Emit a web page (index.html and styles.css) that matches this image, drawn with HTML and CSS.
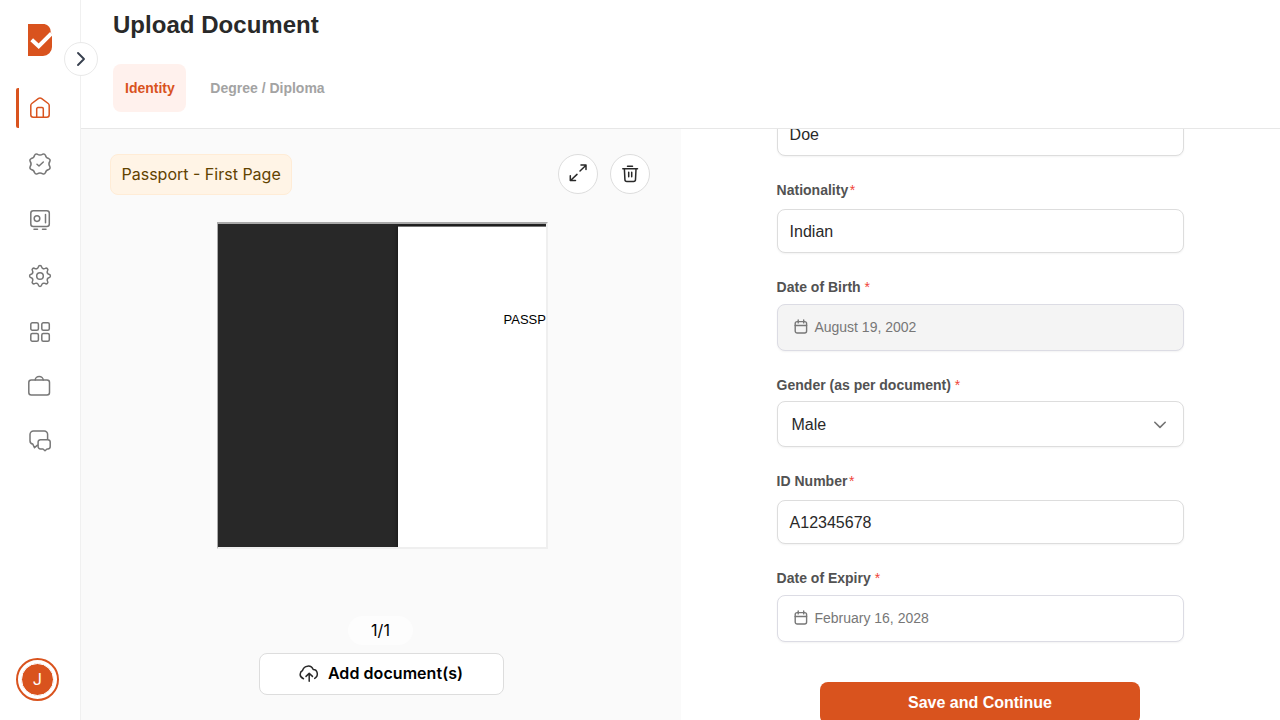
FILE: index.html
```html
<!DOCTYPE html>
<html lang="en">
<head>
<meta charset="utf-8">
<title>Upload Document</title>
<link rel="stylesheet" href="styles.css">
</head>
<body>
<div class="app">
  <aside class="sidebar">
    <svg class="logo" width="24" height="32" viewBox="0 0 24 32"><path d="M0 0h16.500a7.500 7.500 0 0 1 6.200 7.700L24 11v12a9 9 0 0 1-9 9H0z" fill="#d9531e"/><path d="M3.700 15.700l7 6.500L23.500 9.300" fill="none" stroke="#fff" stroke-width="4"/></svg>
    <nav class="nav">
      <a class="nav-item active"><svg width="24" height="24" viewBox="0 0 24 24"><path d="M2.800 9.500a2.500 2.500 0 0 1 1-2L10.600 2.400a2.400 2.400 0 0 1 2.800 0l6.800 5.100a2.500 2.500 0 0 1 1 2v9.300a2.500 2.500 0 0 1-2.500 2.500H5.300a2.500 2.500 0 0 1-2.500-2.500zM8.700 21v-8.200a1.200 1.200 0 0 1 1.200-1.200h4.200a1.200 1.200 0 0 1 1.200 1.200V21"/></svg></a>
      <a class="nav-item"><svg width="24" height="24" viewBox="0 0 24 24"><path d="M9.200 2.100Q12 4.100 14.800 2.100Q16.600 1.400 17.400 3.200Q17.900 6.100 20.800 6.600Q22.600 7.400 21.900 9.200Q19.900 12 21.900 14.800Q22.600 16.600 20.800 17.400Q17.900 17.900 17.400 20.800Q16.600 22.600 14.800 21.900Q12 19.900 9.200 21.900Q7.400 22.600 6.600 20.800Q6.100 17.900 3.200 17.400Q1.400 16.600 2.100 14.800Q4.100 12 2.100 9.200Q1.400 7.400 3.200 6.600Q6.100 6.100 6.600 3.200Q7.400 1.400 9.200 2.100zM9 12.300l2 1.700 4.300-4"/></svg></a>
      <a class="nav-item"><svg width="24" height="24" viewBox="0 0 24 24"><rect x="2.800" y="2.800" width="18.500" height="15.600" rx="2.500"/><circle cx="9" cy="10.600" r="2.800"/><path d="M17.500 6.500v8.200M6 21.200h3.500M14.500 21.200H18"/></svg></a>
      <a class="nav-item"><svg width="24" height="24" viewBox="0 0 24 24"><defs><path id="tooth" d="M8.900 4.600Q10.100 4.200 10.300 3.100Q10.600 1.600 12 1.600T13.700 3.100Q13.900 4.200 15.100 4.600"/></defs><use href="#tooth"/><use href="#tooth" transform="rotate(45 12 12)"/><use href="#tooth" transform="rotate(90 12 12)"/><use href="#tooth" transform="rotate(135 12 12)"/><use href="#tooth" transform="rotate(180 12 12)"/><use href="#tooth" transform="rotate(225 12 12)"/><use href="#tooth" transform="rotate(270 12 12)"/><use href="#tooth" transform="rotate(315 12 12)"/><circle cx="12" cy="12" r="3.300"/></svg></a>
      <a class="nav-item"><svg width="24" height="24" viewBox="0 0 24 24"><rect x="2.800" y="2.800" width="7.600" height="7.400" rx="1.500"/><rect x="13.800" y="2.800" width="7.500" height="7.400" rx="1.500"/><rect x="2.800" y="13.600" width="7.600" height="7.600" rx="1.500"/><rect x="13.800" y="13.600" width="7.500" height="7.600" rx="1.500"/></svg></a>
      <a class="nav-item briefcase"><svg width="24" height="24" viewBox="0 0 24 24"><rect x=".8" y="6" width="20.700" height="15" rx="2.500"/><path d="M7.200 6a4 3.600 0 0 1 8 0"/></svg></a>
      <a class="nav-item chat"><svg width="24" height="24" viewBox="0 0 24 24"><path d="M9.500 16.200l-3 2.500-1.700-3.600C2.700 14.800 2 13.800 2 11.700V5.500A3.500 3.500 0 0 1 5.500 2h10.800a3.300 3.300 0 0 1 3.300 3.300v5"/><path d="M12.500 10.700h7.300a2.400 2.400 0 0 1 2.400 2.400v4.500a2.400 2.400 0 0 1-2.400 2.400H19l-2 1.700-2-1.700h-2.500a2.400 2.400 0 0 1-2.400-2.400v-4.500a2.400 2.400 0 0 1 2.400-2.400z"/></svg></a>
    </nav>
    <div class="avatar"><span>J</span></div>
    <button class="expand"><svg width="16" height="16" viewBox="0 0 16 16"><path d="M5 2l6 6-6 6"/></svg></button>
  </aside>
  <div class="page">
    <header class="header">
      <h1>Upload Document</h1>
      <div class="tabs"><span class="tab selected">Identity</span><span class="tab">Degree / Diploma</span></div>
    </header>
    <main class="content">
      <section class="viewer">
        <div class="viewer-bar">
          <span class="tag">Passport - First Page</span>
          <div class="tools">
            <button class="round"><svg width="20" height="20" viewBox="0 0 20 20"><path d="M12 7l6-5.700M13 .9h5v4.600M9 10.400l-6.200 5.800M2.300 11.700v4.900h5.200"/></svg></button>
            <button class="round"><svg width="20" height="20" viewBox="0 0 20 20"><path d="M7.500 2.300h5M2.800 4.800h14.700M4.400 5.200l.5 10.200a2 2 0 0 0 2 2h6.600a2 2 0 0 0 2-2L16 5.200M8.700 8.300v4.500M11.700 8.300v4.500"/></svg></button>
          </div>
        </div>
        <div class="frame"><div class="sheet">PASSPORT</div></div>
        <span class="counter">1/1</span>
        <button class="add"><svg width="20" height="20" viewBox="0 0 20 20"><path d="M4.500 14.800C-.6 12.500 1 7.600 3.500 6.500 5 1.200 12.200.5 14.200 5.600c4.600.2 5.700 6.200 1.500 8.800M10.200 17.200V9.700M7 12.400l3.200-3 3.300 3"/></svg>Add document(s)</button>
      </section>
      <section class="form-pane">
        <form class="form">
          <div class="input">Doe</div>
          <div class="field"><label>Nationality<i class="close">*</i></label><div class="input">Indian</div></div>
          <div class="field"><label>Date of Birth <i>*</i></label><div class="input date disabled"><svg width="14" height="16" viewBox="0 0 14 16"><rect x="1.200" y="2.600" width="11.400" height="11.400" rx="2"/><path d="M1.200 6.500h11.400M4.200.9v3M9.700.9v3"/></svg>August 19, 2002</div></div>
          <div class="field"><label>Gender (as per document) <i>*</i></label><div class="input select">Male<svg width="14" height="14" viewBox="0 0 14 14"><path d="M1.800 4.300L7 9.400l5.200-5.100"/></svg></div></div>
          <div class="field"><label>ID Number<i class="close">*</i></label><div class="input">A12345678</div></div>
          <div class="field"><label>Date of Expiry <i>*</i></label><div class="input date"><svg width="14" height="16" viewBox="0 0 14 16"><rect x="1.200" y="2.600" width="11.400" height="11.400" rx="2"/><path d="M1.200 6.500h11.400M4.200.9v3M9.700.9v3"/></svg>February 16, 2028</div></div>
          <button class="save" type="button">Save and Continue</button>
        </form>
      </section>
    </main>
  </div>
</div>
</body>
</html>
```

FILE: styles.css
```css
* { box-sizing: border-box; }
body { margin: 0; font-family: "Liberation Sans", Arial, sans-serif; color: #292929; background: #fff; }
button { font: inherit; padding: 0; }
svg { display: block; flex: none; fill: none; stroke: currentColor; stroke-linecap: round; stroke-linejoin: round; }
.logo { stroke: none; stroke-linecap: butt; stroke-linejoin: miter; }
.app { display: flex; width: 1280px; height: 720px; overflow: hidden; }

.sidebar { position: relative; z-index: 2; display: flex; flex-direction: column; width: 81px; padding: 24px 0 19.500px; border-right: 1px solid #f0f0f0; }
.logo { margin-left: 28px; }
.nav { display: flex; flex-direction: column; gap: 16px; margin-top: 32px; margin-left: 16px; }
.nav-item { display: flex; align-items: center; height: 40px; padding-left: 12px; color: #777; }
.nav-item svg { stroke-width: 1.500; }
.nav-item.active { padding-left: 9px; border-left: 3px solid #d9531e; border-radius: 2px 0 0 2px; color: #d9531e; }
.nav-item.briefcase { height: 38px; margin-bottom: -1px; }
.nav-item.briefcase svg { margin-top: -3px; }
.nav-item.chat { height: 39px; }
.avatar { display: flex; width: 43px; height: 43px; margin: auto 0 0 16px; padding: 3px; border: 2px solid #d9531e; border-radius: 50%; }
.avatar span { display: flex; flex: 1; align-items: center; justify-content: center; border: 1px solid #fff; border-radius: 50%; background: #d9531e; color: #fff; font: 16px Roboto, sans-serif; }
.expand { position: absolute; top: 42px; left: 64px; display: flex; align-items: center; justify-content: center; width: 34px; height: 34px; border: 1px solid #e9e9e9; border-radius: 50%; background: #fff; color: #38404f; }
.expand svg { stroke-width: 1.900; }

.page { display: flex; flex: 1; flex-direction: column; min-width: 0; }
.header { height: 129px; padding: 10px 32px 0; border-bottom: 1px solid #e7e7e7; }
h1 { margin: 0; font-size: 24px; letter-spacing: .03px; line-height: 30px; }
.tabs { display: flex; gap: 12px; margin-top: 24px; }
.tab { padding: 0 12px; border-radius: 8px; color: #a3a3a3; font-size: 14px; font-weight: bold; line-height: 48px; }
.tab.selected { padding-right: 11.500px; background: #fff1ed; color: #d9531e; }
.content { display: flex; flex: 1; min-height: 0; }

.viewer { display: flex; flex-direction: column; align-items: center; width: 600px; padding: 24px 31px 0 29px; background: #fafafa; }
.viewer-bar { display: flex; align-self: stretch; align-items: center; justify-content: space-between; height: 42px; }
.tag { height: 41px; padding: 0 10.500px; border: 1px solid #ffecd6; border-radius: 8px; background: #fff4e6; color: #614200; font: 16px/38px Inter, sans-serif; }
.tools { display: flex; gap: 12px; }
.round { display: flex; align-items: center; justify-content: center; width: 40px; height: 40px; border: 1px solid #ddd; border-radius: 50%; background: #fff; color: #292929; }
.round svg { stroke-width: 1.500; }
.frame { width: 331px; height: 327px; margin-top: 27px; margin-left: 4px; padding: 2px 0 0 180px; overflow: hidden; border: 2px solid #efefef; border-top-color: #aaa; border-left: 1px solid #aaa; background: #282828; }
.sheet { height: 400px; padding: 85px 0 0 106px; border-top: 1px solid #777; background: #fff; box-shadow: 0 0 4px #111; color: #000; font-size: 13px; line-height: 15px; }
.counter { width: 65px; margin-top: 67px; margin-left: 1px; border-radius: 15px; background: #fdfdfd; color: #000; font: 16px/29px Inter, sans-serif; text-align: center; }
.add { display: flex; align-items: center; justify-content: center; gap: 9px; width: 245px; height: 42px; margin-top: 8px; margin-left: 2px; padding-bottom: 2px; border: 1px solid #ddd; border-radius: 8px; background: #fff; color: #000; font: 600 16px Inter, sans-serif; letter-spacing: .06px; }
.add svg { margin-top: 1px; color: #292929; stroke-width: 1.500; }

.form-pane { flex: 1; overflow: hidden; padding-left: 96px; }
.form { display: flex; flex-direction: column; gap: 24px; width: 407px; margin-top: -17px; }
label { display: block; margin-bottom: 9px; color: #525252; font-size: 14px; font-weight: bold; line-height: 20px; text-indent: -.4px; }
label i { color: #f04438; font-style: normal; font-weight: normal; }
label .close { margin-left: 1.500px; }
.field:has(.date) label { margin-bottom: 7px; }
.field:has(.select) label { margin-bottom: 6px; }
.input { display: flex; align-items: center; height: 44px; padding: 2px 12px 0 11.600px; border: 1px solid #ddd; border-radius: 8px; background: #fff; box-shadow: 0 1px 2px rgba(0,0,0,.05); font-size: 16px; }
.input.date { gap: 6.400px; height: 47px; padding: 0 16px 2px; border-color: #dcdce4; color: #777; font-size: 14px; }
.date svg { margin-top: 1px; stroke-width: 1.400; }
.input.disabled { background: #f4f4f4; }
.input.select { justify-content: space-between; height: 46px; padding: 2px 16px 0 13.500px; }
.select svg { color: #737373; stroke-width: 1.600; }
.save { width: 320px; height: 42px; margin: 16px 0 0 43px; border: 0; border-radius: 8px; background: #d9531e; color: #fff; font-size: 16px; font-weight: bold; }
```
